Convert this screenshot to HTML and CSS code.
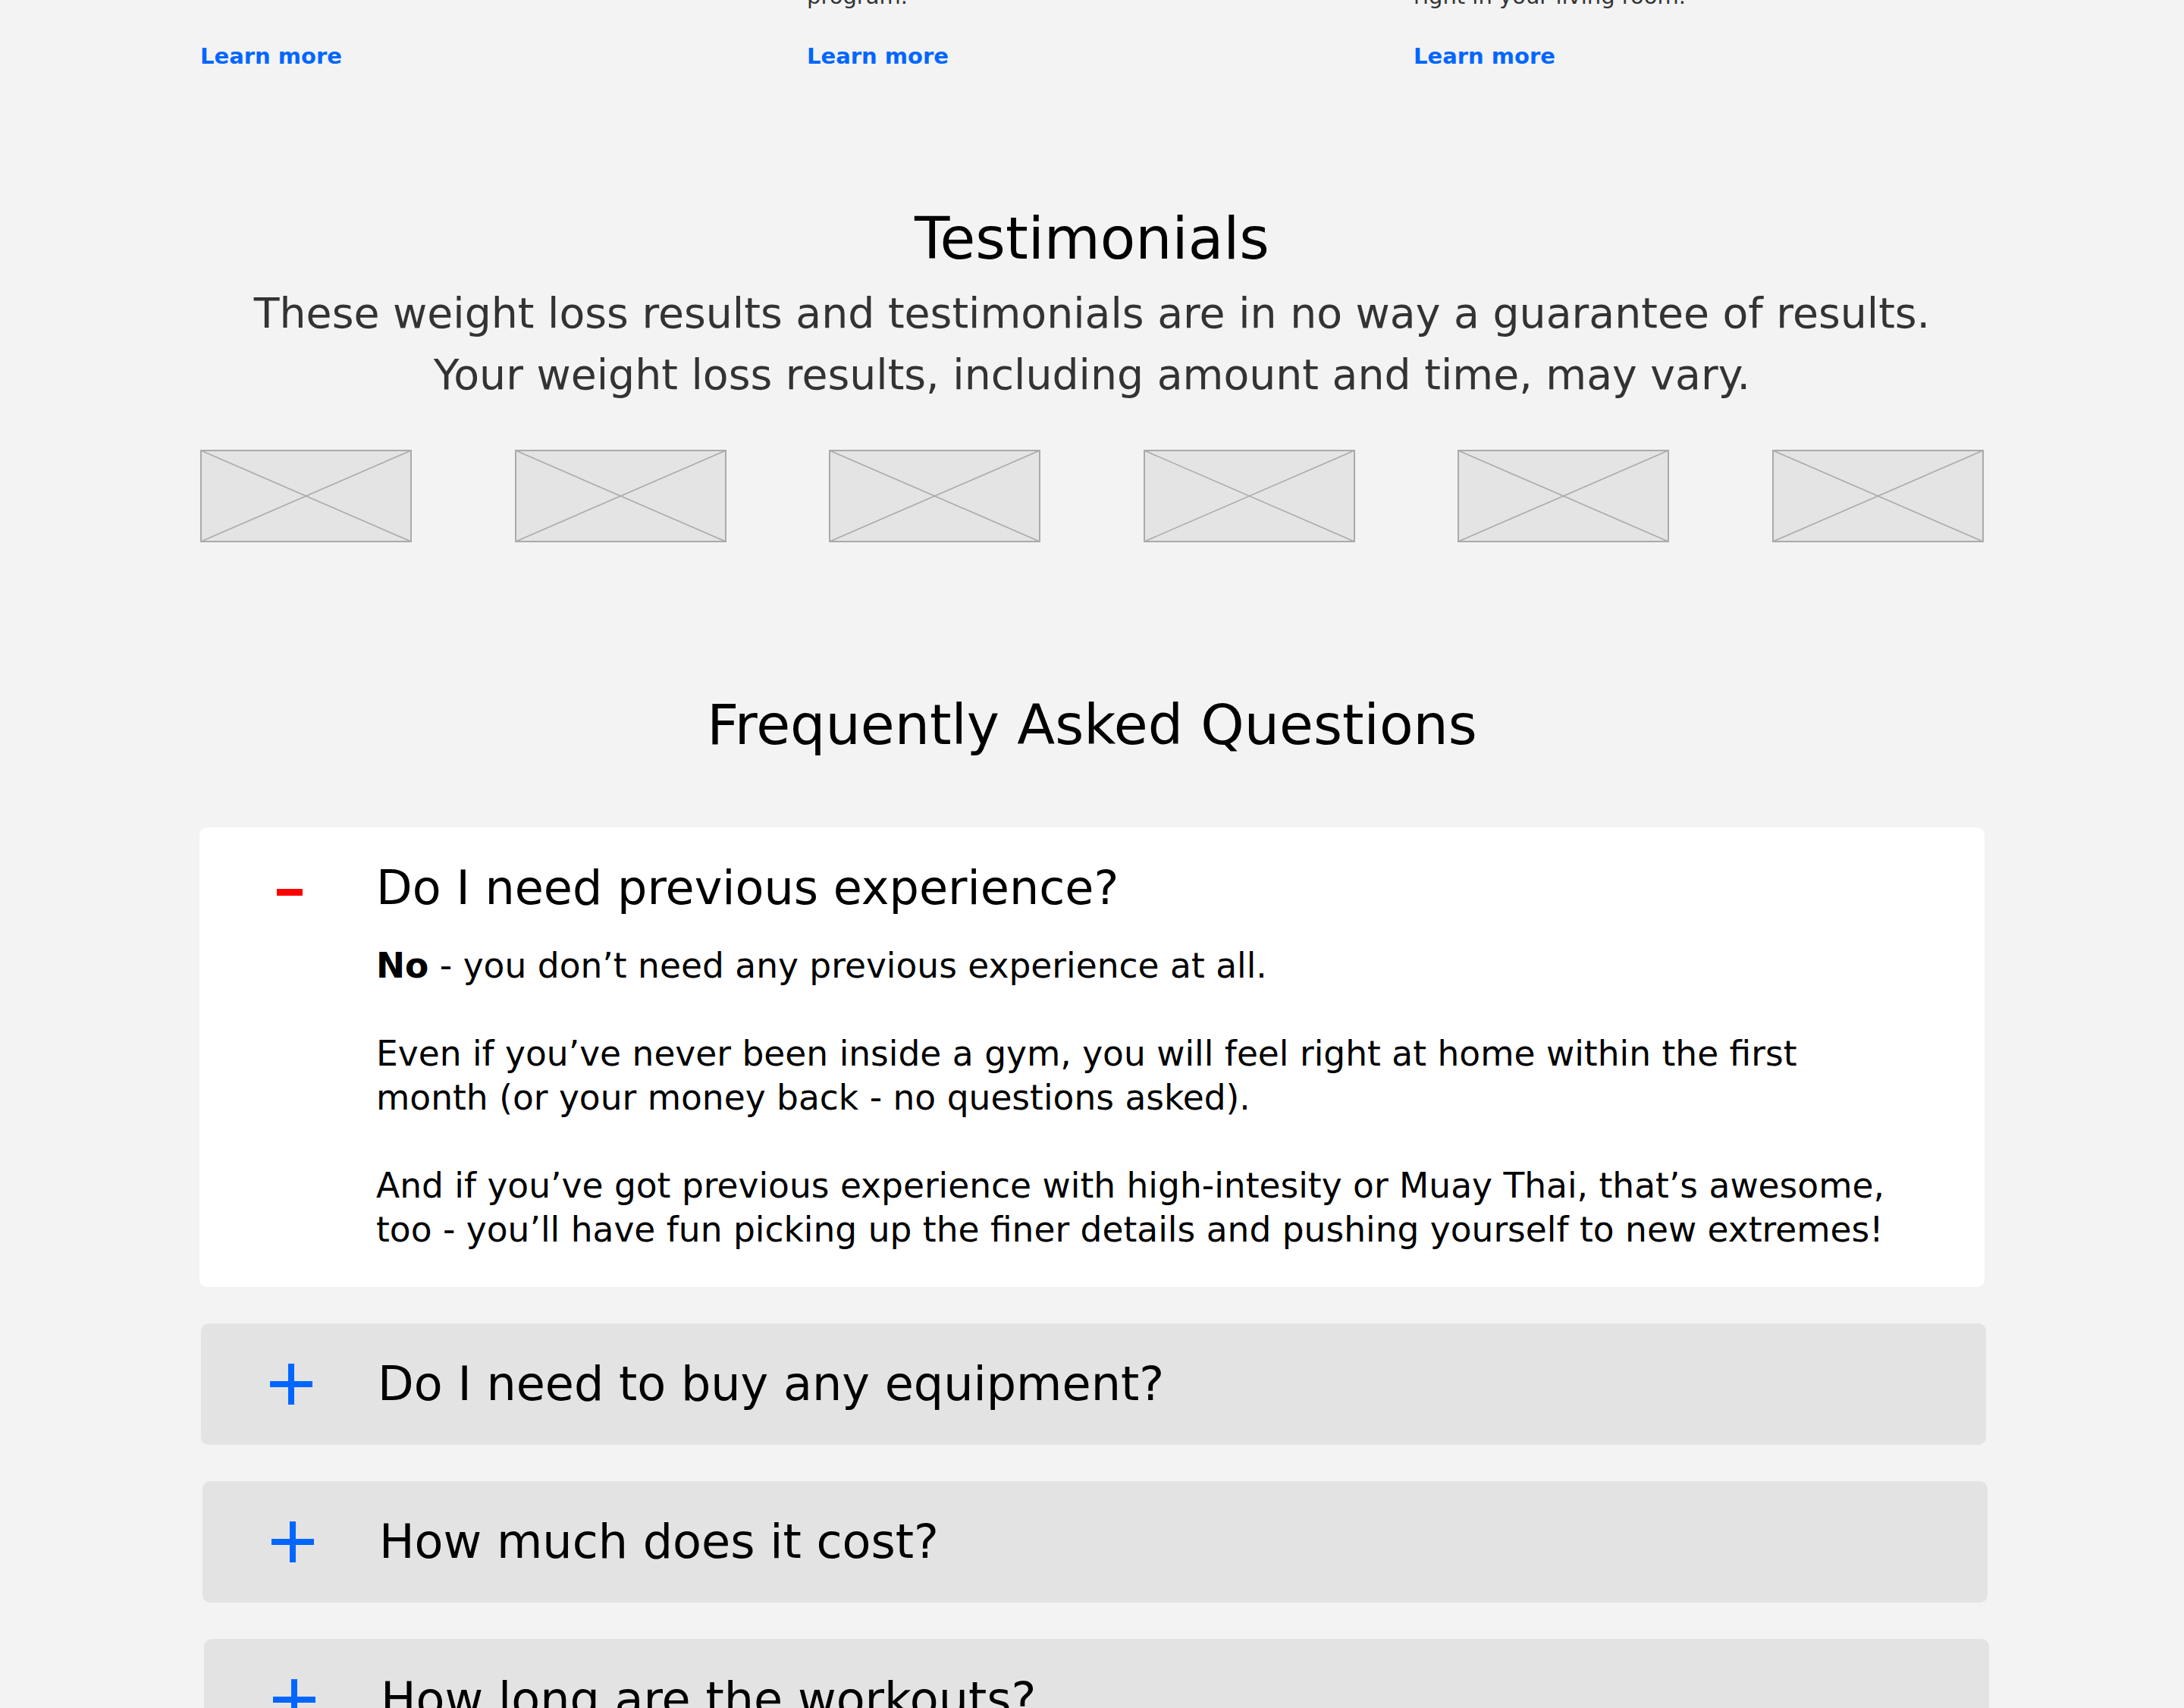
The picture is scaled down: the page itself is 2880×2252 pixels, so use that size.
FILE: index.html
```html
<!DOCTYPE html>
<html>
    <head>
        <meta charset="utf-8">
        <title> Classes | Testimonials & FAQ </title>

        <link rel="stylesheet" href="styles.css">
    </head>

    <body>

        <div class="container">

            <!-- Class cards (end of section) -->
            <div class="features">
                <div class="feature">
                    <p class="featureText">Burn fat and build real strength with our high-intensity interval classes.</p>
                    <a class="learnMore" href="#">Learn more</a>
                </div>
                <div class="feature">
                    <p class="featureText">Learn authentic Muay Thai technique from coaches who guide you through a structured<br>program.</p>
                    <a class="learnMore" href="#">Learn more</a>
                </div>
                <div class="feature">
                    <p class="featureText">Stream every class on demand and train with us from anywhere,<br>right in your living room.</p>
                    <a class="learnMore" href="#">Learn more</a>
                </div>
            </div>

            <!-- Testimonials -->
            <div class="testimonials">
                <h2 class="sectionTitle">Testimonials</h2>
                <p class="subtitle">These weight loss results and testimonials are in no way a guarantee of results.<br>Your weight loss results, including amount and time, may vary.</p>

                <div class="photos">
                    <svg class="photo" viewBox="0 0 279 122"><rect x="1" y="1" width="277" height="120"/><line x1="1" y1="1" x2="278" y2="121"/><line x1="278" y1="1" x2="1" y2="121"/></svg>
                    <svg class="photo" viewBox="0 0 279 122"><rect x="1" y="1" width="277" height="120"/><line x1="1" y1="1" x2="278" y2="121"/><line x1="278" y1="1" x2="1" y2="121"/></svg>
                    <svg class="photo" viewBox="0 0 279 122"><rect x="1" y="1" width="277" height="120"/><line x1="1" y1="1" x2="278" y2="121"/><line x1="278" y1="1" x2="1" y2="121"/></svg>
                    <svg class="photo" viewBox="0 0 279 122"><rect x="1" y="1" width="277" height="120"/><line x1="1" y1="1" x2="278" y2="121"/><line x1="278" y1="1" x2="1" y2="121"/></svg>
                    <svg class="photo" viewBox="0 0 279 122"><rect x="1" y="1" width="277" height="120"/><line x1="1" y1="1" x2="278" y2="121"/><line x1="278" y1="1" x2="1" y2="121"/></svg>
                    <svg class="photo" viewBox="0 0 279 122"><rect x="1" y="1" width="277" height="120"/><line x1="1" y1="1" x2="278" y2="121"/><line x1="278" y1="1" x2="1" y2="121"/></svg>
                </div>
            </div>

            <!-- FAQ -->
            <div class="faq">
                <h2 class="sectionTitle">Frequently Asked Questions</h2>

                <div class="faqList">
                    <div class="faqItem open">
                        <div class="question">
                            <span class="icon"><span class="minus"></span></span>
                            <span>Do I need previous experience?</span>
                        </div>
                        <div class="answer">
                            <p><strong>No</strong> - you don’t need any previous experience at all.</p>
                            <p>Even if you’ve never been inside a gym, you will feel right at home within the first month (or your money back - no questions asked).</p>
                            <p>And if you’ve got previous experience with high-intesity or Muay Thai, that’s awesome, too - you’ll have fun picking up the finer details and pushing yourself to new extremes!</p>
                        </div>
                    </div>

                    <div class="faqItem">
                        <div class="question">
                            <span class="icon"><svg class="plus" viewBox="0 0 56 54"><rect x="0" y="23" width="56" height="8"/><rect x="24" y="0" width="8" height="54"/></svg></span>
                            <span>Do I need to buy any equipment?</span>
                        </div>
                    </div>

                    <div class="faqItem">
                        <div class="question">
                            <span class="icon"><svg class="plus" viewBox="0 0 56 54"><rect x="0" y="23" width="56" height="8"/><rect x="24" y="0" width="8" height="54"/></svg></span>
                            <span>How much does it cost?</span>
                        </div>
                    </div>

                    <div class="faqItem">
                        <div class="question">
                            <span class="icon"><svg class="plus" viewBox="0 0 56 54"><rect x="0" y="23" width="56" height="8"/><rect x="24" y="0" width="8" height="54"/></svg></span>
                            <span>How long are the workouts?</span>
                        </div>
                    </div>
                </div>
            </div>

        </div>

    </body>
</html>
```

FILE: styles.css
```css
body{
    margin: 0;
    background-color: #f3f3f3;
    font-family: "DejaVu Sans", "Liberation Sans", sans-serif;
    color: #000;
}

.container{
    width: 2352px;
    margin: 0 auto;
}

/* Class cards */

.features{
    display: grid;
    grid-template-columns: repeat(3, 1fr);
    column-gap: 48px;
    margin-top: -110px;
}

.feature{
    display: flex;
    flex-direction: column;
}

.featureText{
    margin: 0 0 37px;
    font-size: 29px;
    line-height: 42px;
    color: #333;
}

.learnMore{
    margin-top: auto;
    font-size: 29px;
    line-height: 42px;
    font-weight: bold;
    color: #0066ff;
    text-decoration: none;
}

/* Section titles */

.sectionTitle{
    margin: 0;
    font-size: 73px;
    line-height: 1.2;
    font-weight: normal;
    text-align: center;
}

/* Testimonials */

.testimonials{
    padding-top: 174px;
}

.testimonials .sectionTitle{
    font-size: 76px;
}

.subtitle{
    margin: 13px 0 0;
    font-size: 55.3px;
    line-height: 81px;
    text-align: center;
    color: #333;
}

.photos{
    display: flex;
    justify-content: space-between;
    margin-top: 58px;
}

.photo{
    display: block;
    width: 279px;
    height: 122px;
}

.photo rect{
    fill: #e4e4e4;
    stroke: #aaa;
    stroke-width: 2;
}

.photo line{
    stroke: #aaa;
    stroke-width: 1.6;
}

/* FAQ */

.faq{
    padding-top: 197px;
}

.faqList{
    margin: 91px -1px 0;
}

.faqItem{
    background: #e3e3e3;
    border-radius: 10px;
    padding: 46px 88px 46px 91px;
    margin-bottom: 48px;
}

.faqItem:nth-child(2){ margin-left: 2px; margin-right: -2px; }
.faqItem:nth-child(3){ margin-left: 4px; margin-right: -4px; }
.faqItem:nth-child(4){ margin-left: 6px; margin-right: -6px; }

.faqItem.open{
    background: #fff;
}

.question{
    display: flex;
    align-items: center;
    height: 68px;
    font-size: 62px;
    line-height: 68px;
}

.icon{
    display: flex;
    justify-content: center;
    flex: 0 0 56px;
    margin-right: 86px;
}

.minus{
    display: block;
    width: 34px;
    height: 9px;
    margin-top: 12px;
    background: #ff0000;
}

.plus{
    display: block;
    width: 56px;
    height: 54px;
    fill: #0066ff;
}

.answer{
    margin: 40px 0 0 142px;
    font-size: 45.5px;
    line-height: 58px;
}

.answer p{
    margin: 0 0 58px;
}

.answer p:last-child{
    margin-bottom: 0;
}
```
